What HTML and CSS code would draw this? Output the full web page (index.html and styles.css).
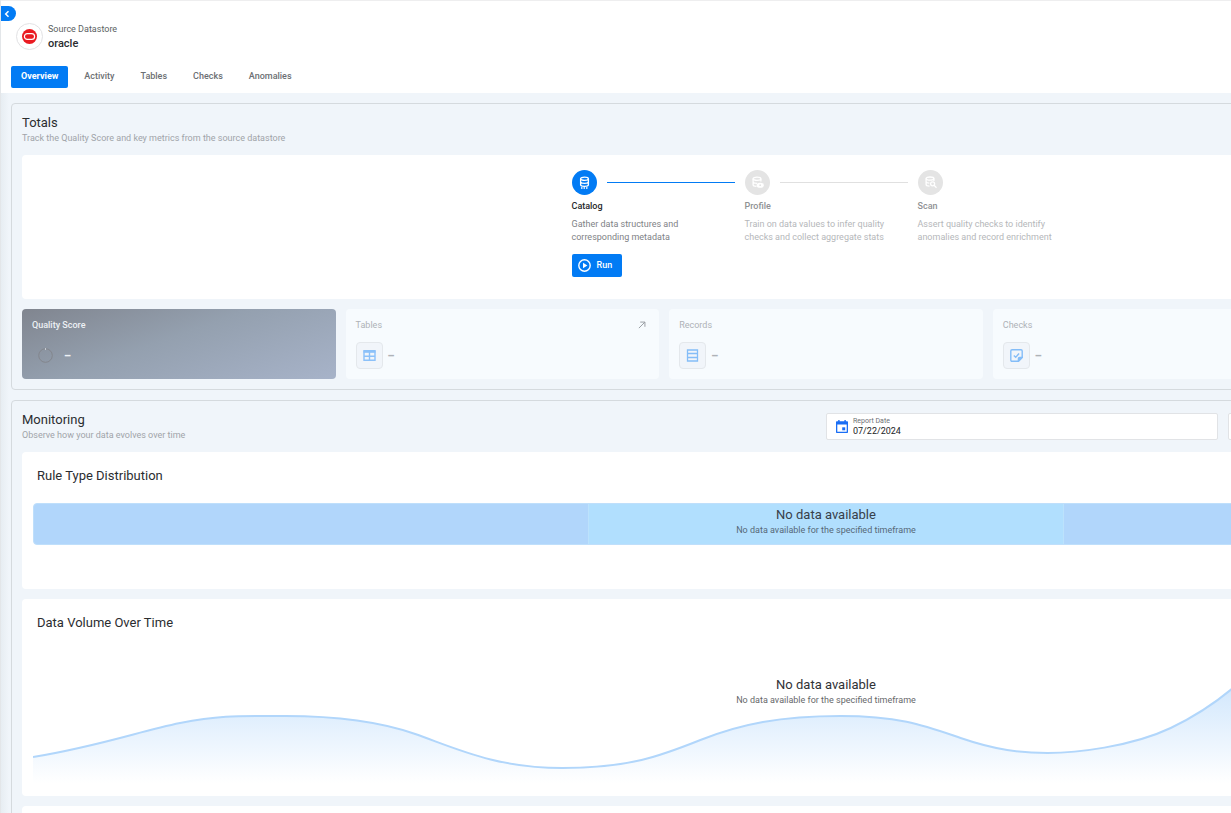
FILE: index.html
```html
<!DOCTYPE html>
<html lang="en">
<head>
<meta charset="utf-8">
<title>oracle - Source Datastore</title>
<link rel="stylesheet" href="styles.css">
</head>
<body>
<div class="shell">
  <header class="header">
    <button class="collapse" type="button" aria-label="Expand sidebar">
      <svg width="6" height="8" viewBox="0 0 6 8"><path d="M4.5 1.200 1.700 4l2.800 2.800" fill="none" stroke="#fff" stroke-width="1.5"/></svg>
    </button>
    <div class="source">
      <span class="avatar">
        <svg width="15" height="15" viewBox="0 0 15 15"><circle cx="7.5" cy="7.5" r="7.5" fill="#ea1b22"/><rect x="2.400" y="4.600" width="10.200" height="5.800" rx="2.900" fill="none" stroke="#fff" stroke-width="1.200"/></svg>
      </span>
      <div>
        <p class="source-kind">Source Datastore</p>
        <h1 class="source-name">oracle</h1>
      </div>
    </div>
    <nav class="tabs">
      <a class="tab active" href="#overview">Overview</a>
      <a class="tab" href="#activity">Activity</a>
      <a class="tab" href="#tables">Tables</a>
      <a class="tab" href="#checks">Checks</a>
      <a class="tab" href="#anomalies">Anomalies</a>
    </nav>
  </header>

  <main class="main">
    <section class="panel">
      <div class="panel-head">
        <div>
          <h2 class="title">Totals</h2>
          <p class="subtitle">Track the Quality Score and key metrics from the source datastore</p>
        </div>
      </div>
      <div class="card onboarding">
        <ol class="steps">
          <li class="step current">
            <div class="track"><span class="dot">
              <svg width="13" height="13" viewBox="0 0 13 13" fill="none" stroke="#fff" stroke-width="1.3"><ellipse cx="6.5" cy="2.700" rx="3.900" ry="1.600"/><path d="M2.600 2.700v6c0 1 1.700 1.600 3.900 1.600s3.900-.6 3.900-1.600v-6M2.600 5.700c0 1 1.700 1.600 3.900 1.600s3.900-.6 3.900-1.600"/><path d="M3 12h7" stroke-dasharray="1.5 1"/></svg>
            </span><span class="line"></span></div>
            <h3 class="step-title">Catalog</h3>
            <p class="step-text">Gather data structures and corresponding metadata</p>
            <button class="run" type="button">
              <svg width="13" height="13" viewBox="0 0 13 13"><circle cx="6.5" cy="6.5" r="5.700" fill="none" stroke="#fff" stroke-width="1.400"/><path d="M5 3.800 9.400 6.500 5 9.200z" fill="#fff"/></svg>
              Run
            </button>
          </li>
          <li class="step">
            <div class="track"><span class="dot">
              <svg width="13" height="13" viewBox="0 0 13 13" fill="none" stroke="#fff" stroke-width="1.3"><ellipse cx="6" cy="2.800" rx="3.900" ry="1.600"/><path d="M2.100 2.800v6c0 1 1.500 1.600 3.400 1.600M9.900 2.800v2.700M2.100 5.800c0 1 1.700 1.600 3.900 1.600"/><ellipse cx="9.200" cy="9.200" rx="3" ry="1.900" fill="#fff"/><circle cx="9.200" cy="9.200" r=".9" fill="#e4e4e4" stroke="none"/></svg>
            </span><span class="line"></span></div>
            <h3 class="step-title">Profile</h3>
            <p class="step-text">Train on data values to infer quality checks and collect aggregate stats</p>
          </li>
          <li class="step">
            <div class="track"><span class="dot">
              <svg width="13" height="13" viewBox="0 0 13 13" fill="none" stroke="#fff" stroke-width="1.3"><ellipse cx="6" cy="2.600" rx="3.900" ry="1.600"/><path d="M2.100 2.600v6c0 1 1.500 1.600 3.400 1.600M9.900 2.600v2.300M2.100 5.600c0 1 1.700 1.600 3.200 1.600"/><circle cx="8.600" cy="7.800" r="2"/><path d="m10.100 9.300 2.400 2.400"/></svg>
            </span></div>
            <h3 class="step-title">Scan</h3>
            <p class="step-text">Assert quality checks to identify anomalies and record enrichment</p>
          </li>
        </ol>
      </div>
      <div class="stats">
        <article class="stat score">
          <h3 class="stat-label">Quality Score</h3>
          <div class="stat-row">
            <span class="ring"><svg width="15" height="15" viewBox="0 0 15 15" fill="none"><circle cx="7.5" cy="7.5" r="6.800" stroke="#83868d"/><path d="M7.5.2v1.600" stroke="#d5d9df"/></svg></span>
            <span>–</span>
          </div>
        </article>
        <article class="stat">
          <h3 class="stat-label">Tables
            <a class="open" href="#tables" aria-label="Open tables"><svg width="8" height="8" viewBox="0 0 9 9" fill="none" stroke="#8f9499"><path d="M1 8 7.500 1.500M2.500 1.200h5.300v5.300"/></svg></a>
          </h3>
          <div class="stat-row">
            <span class="stat-icon"><svg width="13" height="13" viewBox="0 0 13 13" fill="none" stroke="#8cc1f9" stroke-width="1.400"><path d="M1 1.700h11v9.600H1z"/><path d="M.5 2.800h12" stroke-width="2"/><path d="M1 7.200h11M6.500 3v8.300"/></svg></span>
            <span>–</span>
          </div>
        </article>
        <article class="stat">
          <h3 class="stat-label">Records</h3>
          <div class="stat-row">
            <span class="stat-icon"><svg width="13" height="13" viewBox="0 0 13 13" fill="none" stroke="#84bdf8"><path d="M1.500 1h10v11h-10zM1.500 4.500h10M1.500 8.500h10" stroke-width="1.300"/></svg></span>
            <span>–</span>
          </div>
        </article>
        <article class="stat">
          <h3 class="stat-label">Checks</h3>
          <div class="stat-row">
            <span class="stat-icon"><svg width="13" height="13" viewBox="0 0 13 13" fill="none" stroke="#84bdf8" stroke-width="1.400"><path d="M2 .8h9c.8 0 1.200.4 1.200 1.200v6.400l-3.800 3.800H2c-.8 0-1.200-.4-1.200-1.200V2C.8 1.200 1.200.8 2 .8z"/><path d="M12.200 8.400H9.600c-.8 0-1.200.4-1.200 1.200v2.600z" fill="#84bdf8"/><path d="m3.800 6.400 1.900 1.800 3.400-3.600"/></svg></span>
            <span>–</span>
          </div>
        </article>
      </div>
    </section>

    <section class="panel">
      <div class="panel-head">
        <div>
          <h2 class="title">Monitoring</h2>
          <p class="subtitle">Observe how your data evolves over time</p>
        </div>
        <div class="filters">
          <div class="field date">
            <svg width="12" height="13" viewBox="0 0 12 13"><path d="M2.200 0h1.400v1.300h4.800V0h1.400v1.300H11c.6 0 1 .4 1 1V12c0 .6-.4 1-1 1H1c-.6 0-1-.4-1-1V2.300c0-.6.4-1 1-1h1.200zM1.300 4.500v7.200h9.400V4.500z" fill="#1a6ef5"/><path d="M6.200 7.300h3v3h-3z" fill="#1a6ef5"/></svg>
            <div class="field-body">
              <label class="field-label" for="date">Report Date</label>
              <input class="field-input" id="date" type="text" value="07/22/2024">
            </div>
          </div>
          <div class="field"></div>
        </div>
      </div>

      <div class="charts">
        <article class="card chart-card rules">
          <h3 class="title">Rule Type Distribution</h3>
          <div class="bar">
            <span class="side"></span>
            <div class="middle empty">
              <p class="empty-title">No data available</p>
              <p class="empty-text">No data available for the specified timeframe</p>
            </div>
            <span class="side"></span>
          </div>
        </article>

        <article class="card chart-card volume">
          <h3 class="title">Data Volume Over Time</h3>
          <div class="plot">
            <svg class="wave" viewBox="0 0 1585 145" preserveAspectRatio="none">
              <defs>
                <linearGradient id="fade" gradientUnits="userSpaceOnUse" x1="0" y1="10" x2="0" y2="143">
                  <stop offset="0" stop-color="#b1d6fb" stop-opacity=".8"/>
                  <stop offset="1" stop-color="#b1d6fb" stop-opacity="0"/>
                </linearGradient>
              </defs>
              <path fill="url(#fade)" d="M0 117C67 106 107 91 147 83S207 76 252 76S342 80 382 94S462 128 529 128S627 116 667 100S747 76 807 76S892 86 927 98S987 113 1014 113S1097 107 1137 88C1160 77 1180 64 1198 49C1240 16 1280 4 1330 4C1430 4 1500 60 1585 70V145H0z"/>
              <path class="wave-line" d="M0 117C67 106 107 91 147 83S207 76 252 76S342 80 382 94S462 128 529 128S627 116 667 100S747 76 807 76S892 86 927 98S987 113 1014 113S1097 107 1137 88C1160 77 1180 64 1198 49C1240 16 1280 4 1330 4C1430 4 1500 60 1585 70"/>
            </svg>
            <div class="empty overlay">
              <p class="empty-title">No data available</p>
              <p class="empty-text">No data available for the specified timeframe</p>
            </div>
          </div>
        </article>

        <article class="card chart-card next"></article>
      </div>
    </section>
  </main>
</div>
</body>
</html>
```

FILE: styles.css
```css
* { box-sizing: border-box; }
html { height: 100%; overflow: hidden; }
body {
  height: 100%;
  margin: 0;
  overflow: hidden;
  border-left: 1px solid #e3e6e9;
  background: #f0f5fa;
  color: #2b2d30;
  font: 9px/13px Roboto, Inter, sans-serif;
}
h1, h2, h3, p, ol { margin: 0; padding: 0; font-size: inherit; font-weight: 400; }
ol { list-style: none; }
button { border: 0; padding: 0; font: inherit; cursor: pointer; }
a { color: inherit; text-decoration: none; }
svg { display: block; flex: none; }

/* The dashboard is wider than the window and is clipped at the right. */
.shell { width: calc(100% + 420px); }

.header {
  position: relative;
  padding: 21px 10px 5px;
  border-top: 1px solid #eeeeef;
  background: #fff;
}
.collapse {
  position: absolute;
  top: 5px;
  left: 0;
  display: flex;
  align-items: center;
  width: 15px;
  height: 15px;
  padding-left: 3px;
  border-radius: 0 8px 8px 0;
  background: #027bf4;
}
.source { display: flex; align-items: center; gap: 5px; padding-left: 5px; }
.avatar {
  display: grid;
  place-items: center;
  width: 27px;
  height: 27px;
  border: 1px solid #e2e2e4;
  border-radius: 50%;
}
.source-kind { line-height: 14px; color: #5c5f63; }
.source-name { font-size: 11px; line-height: 15px; font-weight: 500; }
.tabs { display: flex; gap: 6px; margin-top: 15px; }
.tab {
  padding: 0 10px 2px;
  border-radius: 2px;
  line-height: 20px;
  font-weight: 500;
  color: #6c6f73;
}
.tab.active { background: #027bf4; color: #fff; font-weight: 700; }

.main {
  display: grid;
  gap: 10px;
  padding: 10px;
  background: linear-gradient(90deg, #e7edf2, #f0f5fa 8px);
}
.panel {
  padding: 10px;
  border: 1px solid #d5dade;
  border-radius: 4px;
  background: #f0f5fa;
}
.panel-head { display: flex; justify-content: space-between; }
.title { font-size: 13px; line-height: 18px; }
.subtitle { line-height: 13px; color: #a0a4a9; }
.card { border-radius: 4px; background: #fff; }

.onboarding { display: flex; justify-content: center; margin: 10px 0; padding: 15px 0 22px; }
.steps { display: grid; grid-template-columns: repeat(3, 163px); gap: 10px; }
.step { color: #b5b7ba; }
.track { display: flex; align-items: center; gap: 10px; }
.dot {
  display: grid;
  place-items: center;
  width: 25px;
  height: 25px;
  border-radius: 50%;
  background: #e4e4e4;
}
.line { flex: 1; height: 1px; background: #e0e0e0; }
.step-title { margin: 5px 0; font-weight: 500; color: #8f9194; }
.step-text { padding-right: 10px; }
.current { color: #808286; }
.current .dot, .current .line { background: #027bf4; }
.current .step-title { color: #25272a; }
.run {
  display: flex;
  align-items: center;
  gap: 6px;
  height: 23px;
  margin-top: 10px;
  padding: 0 10px 0 6px;
  border-radius: 2px;
  background: #027bf4;
  color: #fff;
  font-weight: 500;
}

.stats { display: grid; grid-template-columns: repeat(5, 1fr); gap: 10px; }
.stat { height: 70px; padding: 9px 10px; border-radius: 4px; background: #f7fbfe; color: #aeb2b7; }
.stat-label { display: flex; justify-content: space-between; align-items: center; line-height: 14px; }
.open { padding: 3px; }
.stat-row { display: flex; align-items: center; gap: 5px; height: 27px; margin-top: 10px; font-size: 11px; font-weight: 900; }
.stat-icon {
  display: grid;
  place-items: center;
  width: 27px;
  height: 27px;
  border: 1px solid #e4e8ec;
  border-radius: 4px;
  background: #f1f5fa;
}
.score { background: linear-gradient(160deg, #80858f, #94a0af 45%, #a7b3c9); color: #edf1f5; }
.score .stat-label { font-weight: 500; }
.ring { display: grid; place-items: center; width: 27px; }

.filters { display: flex; gap: 10px; width: 50%; padding-top: 2px; }
.field {
  display: flex;
  align-items: center;
  gap: 5px;
  flex: 41;
  height: 27px;
  padding: 0 9px;
  border: 1px solid #e1e3e6;
  border-radius: 2px;
  background: #fff;
}
.date { flex: 40; }
.field-body { display: grid; flex: 1; }
.field-label { font-size: 7px; line-height: 9px; color: #6d7074; }
.field-input {
  width: 100%;
  height: 11px;
  padding: 0;
  border: 0;
  background: none;
  color: #222426;
  font: inherit;
  line-height: 11px;
}

.charts { display: grid; gap: 10px; margin-top: 10px; }
.chart-card { padding: 15px 11px 0; }
.chart-card > .title { padding-left: 4px; }
.rules { height: 137px; }
.bar {
  display: flex;
  height: 42px;
  margin-top: 18px;
  border: 1px solid #bfdffb;
  border-radius: 4px;
  background: #b1d6fb;
}
.side { flex: 555; }
.middle { flex: 475; border: solid #bce2fc; border-width: 0 1px; background: #b1dffe; }
.empty { text-align: center; color: #37404a; }
.empty-title { padding-top: 2px; font-size: 13px; line-height: 18px; }
.empty-text { line-height: 13px; opacity: .75; }
.volume { height: 197px; }
.plot { position: relative; margin-top: 8px; }
.wave { width: 100%; height: 145px; }
.wave-line { fill: none; stroke: #b1d6fb; stroke-width: 2; vector-effect: non-scaling-stroke; }
.overlay { position: absolute; top: 34px; left: 0; width: 100%; color: #303235; }
.next { height: 137px; }
```
